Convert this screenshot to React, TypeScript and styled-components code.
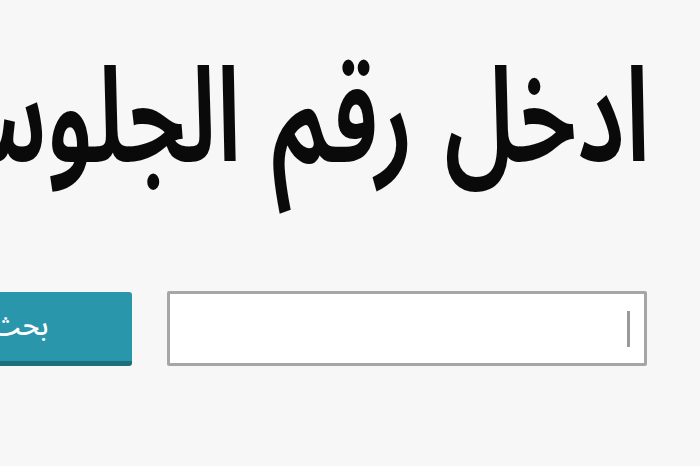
import React from "react";
import styled, { createGlobalStyle } from "styled-components";

const GlobalStyle = createGlobalStyle`
  html, body {
    margin: 0;
    padding: 0;
    background: #f7f7f7;
  }
  body {
    width: 700px;
    height: 466px;
    overflow: hidden;
    direction: rtl;
    font-family: "Noto Sans Arabic", "DejaVu Sans", sans-serif;
  }
`;

const Page = styled.div`
  width: 700px;
  height: 466px;
  overflow: hidden;
  display: flex;
  flex-direction: column;
  padding-top: 30px;
  box-sizing: border-box;
`;

const Title = styled.h1`
  margin: 0;
  padding-right: 50px;
  font-family: "Noto Sans Arabic", sans-serif;
  font-weight: 600;
  font-size: 96px;
  line-height: 130px;
  word-spacing: 6px;
  color: #0a0a0a;
  white-space: nowrap;
  transform: scaleY(1.38);
  transform-origin: 50% 0;
`;

const SearchRow = styled.div`
  display: flex;
  align-items: center;
  gap: 35px;
  margin-top: 131px;
  padding-right: 53px;
`;

const InputBox = styled.div`
  position: relative;
  flex: 0 0 auto;
  width: 480px;
  height: 75px;
  box-sizing: border-box;
  background: #fff;
  border: 3px solid #a6a6a6;
  border-radius: 2px;
`;

const Caret = styled.span`
  position: absolute;
  right: 14px;
  top: 17px;
  width: 3px;
  height: 36px;
  background: #9a9a9a;
`;

const SearchButton = styled.button`
  flex: 0 0 auto;
  width: 224px;
  height: 74px;
  border: none;
  border-bottom: 5px solid #1e6f7c;
  border-radius: 3px;
  background: #2996ab;
  color: #fff;
  font-family: "Noto Sans Arabic", sans-serif;
  font-weight: 500;
  font-size: 28px;
  padding: 0;
`;

export default function App() {
  return (
    <>
      <GlobalStyle />
      <Page>
        <Title>ادخل رقم الجلوس</Title>
        <SearchRow>
          <InputBox>
            <Caret />
          </InputBox>
          <SearchButton>بحث</SearchButton>
        </SearchRow>
      </Page>
    </>
  );
}
